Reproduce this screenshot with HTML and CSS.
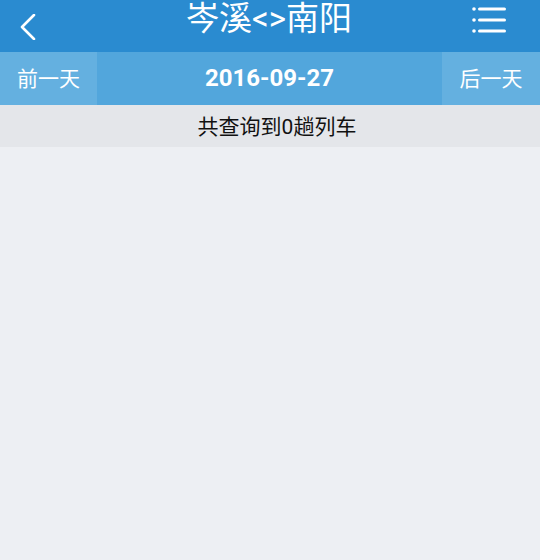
FILE: index.html
```html
<!DOCTYPE html>
<html>
<head>
<meta charset="utf-8">
<link rel="stylesheet" href="styles.css">
</head>
<body>
<div class="page">
  <header class="topbar">
    <div class="back">
      <svg width="16" height="26" viewBox="0 0 16 26"><polyline points="14,1 2,13 14,25" fill="none" stroke="#fff" stroke-width="2.6" stroke-linecap="round" stroke-linejoin="round"/></svg>
    </div>
    <div class="title">岑溪&lt;&gt;南阳</div>
    <div class="menu">
      <svg width="34" height="28" viewBox="0 0 34 28"><circle cx="2" cy="3" r="1.8" fill="#fff"/><circle cx="2" cy="14" r="1.8" fill="#fff"/><circle cx="2" cy="25" r="1.8" fill="#fff"/><rect x="6" y="1.5" width="28" height="3" rx="1.5" fill="#fff"/><rect x="6" y="12.5" width="28" height="3" rx="1.5" fill="#fff"/><rect x="6" y="23.5" width="28" height="3" rx="1.5" fill="#fff"/></svg>
    </div>
  </header>
  <nav class="datebar">
    <div class="side">前一天</div>
    <div class="date">2016-09-27</div>
    <div class="side">后一天</div>
  </nav>
  <div class="info">共查询到0趟列车</div>
</div>
</body>
</html>
```
FILE: styles.css
```css
html, body { margin: 0; padding: 0; }
body {
  width: 540px;
  height: 560px;
  background: #edeff3;
  font-family: Roboto, "Noto Sans CJK SC", sans-serif;
  overflow: hidden;
}
.topbar {
  height: 52px;
  background: #2a8bd0;
  display: flex;
  align-items: center;
  justify-content: space-between;
  color: #fff;
}
.back {
  width: 60px;
  display: flex;
  justify-content: flex-start;
  padding-left: 20px;
  box-sizing: border-box;
  margin-top: 2px;
}
.title {
  font-size: 33px;
  line-height: 38px;
  margin-top: -14px;
  margin-left: 8px;
}
.menu {
  width: 70px;
  display: flex;
  justify-content: flex-start;
  padding-left: 2px;
  box-sizing: border-box;
  margin-top: -12px;
}
.datebar {
  height: 53px;
  display: flex;
  color: #fff;
}
.side {
  width: 97px;
  background: #64b0e0;
  display: flex;
  align-items: center;
  justify-content: center;
  font-size: 21px;
  padding-bottom: 3px;
  box-sizing: border-box;
}
.side:last-child { width: 98px; }
.date {
  flex: 1;
  background: #52a6dc;
  display: flex;
  align-items: center;
  justify-content: center;
  font-size: 24px;
  font-weight: bold;
  padding-bottom: 1px;
  box-sizing: border-box;
}
.info {
  height: 42px;
  background: #e4e6ea;
  display: flex;
  align-items: center;
  justify-content: center;
  font-size: 21px;
  color: #111;
  padding-bottom: 3px;
  padding-left: 14px;
  box-sizing: border-box;
}
```
